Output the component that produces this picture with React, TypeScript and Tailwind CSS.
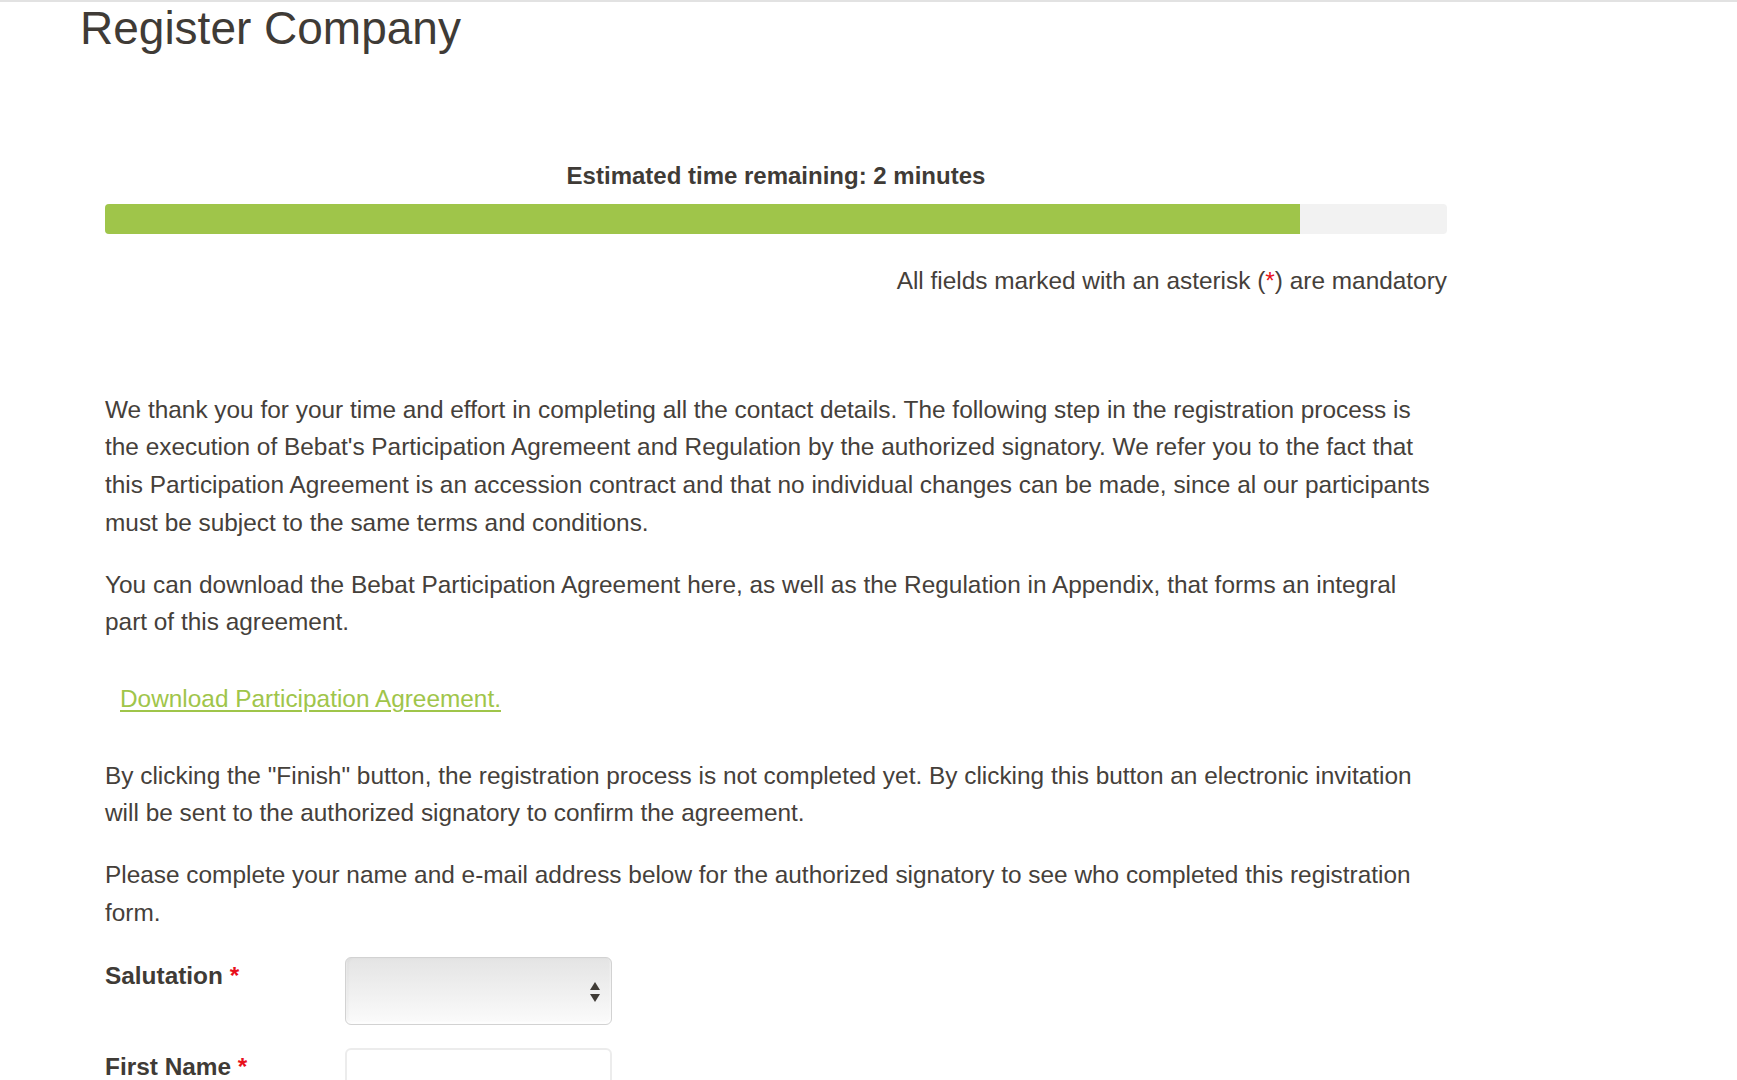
import React from "react";

export default function App() {
  return (
    <div
      className="min-h-[1080px] w-full bg-white text-[#45403a]"
      style={{ fontFamily: '"Liberation Sans", Arial, Helvetica, sans-serif' }}
    >
      <div className="h-[2px] w-full bg-[#e2e2e2]" />
      <div className="pl-[80px]">
        <h1 className="mt-[3px] text-[46px] leading-none font-normal text-[#3f3b36]">Register Company</h1>
        <div className="ml-[25px] w-[1342px]">
          <div className="mt-[111px] text-center text-[24px] leading-[28px] font-bold text-[#3f3b36]">
            Estimated time remaining: 2 minutes
          </div>
          <div className="mt-[14px] flex h-[30px] w-full overflow-hidden rounded-[4px] bg-[#f2f2f2]">
            <div className="h-full w-[1195px] bg-[#9fc54a]" />
          </div>
          <div className="mt-[28px] text-right text-[24.4px] leading-[37.7px]">
            All fields marked with an asterisk (<span className="text-[#e8101b]">*</span>) are mandatory
          </div>
          <div className="mt-[91px] text-[24.4px] leading-[37.7px]">
            <p>
              We thank you for your time and effort in completing all the contact details. The following step in the registration process is
              <br />
              the execution of Bebat's Participation Agremeent and Regulation by the authorized signatory. We refer you to the fact that
              <br />
              this Participation Agreement is an accession contract and that no individual changes can be made, since al our participants
              <br />
              must be subject to the same terms and conditions.
            </p>
            <p className="mt-[24px]">
              You can download the Bebat Participation Agreement here, as well as the Regulation in Appendix, that forms an integral
              <br />
              part of this agreement.
            </p>
            <p className="mt-[39px] pl-[15px]">
              <a href="#" className="text-[#9fc54a] underline underline-offset-[3px]">
                Download Participation Agreement.
              </a>
            </p>
            <p className="mt-[39px]">
              By clicking the "Finish" button, the registration process is not completed yet. By clicking this button an electronic invitation
              <br />
              will be sent to the authorized signatory to confirm the agreement.
            </p>
            <p className="mt-[24px]">
              Please complete your name and e-mail address below for the authorized signatory to see who completed this registration
              <br />
              form.
            </p>
          </div>
          <div className="mt-[26px] flex flex-col gap-[23px]">
            <div className="flex items-start">
              <div className="w-[240px] text-[24.4px] leading-[37.7px] font-bold text-[#3f3b36]">
                Salutation <span className="text-[#e8101b]">*</span>
              </div>
              <div className="relative h-[68px] w-[267px] rounded-[6px] border border-[#d2d2d2] bg-gradient-to-b from-[#e4e4e4] to-[#fbfbfb] shadow-[inset_0_-2px_3px_rgba(255,255,255,0.9),inset_2px_0_3px_rgba(0,0,0,0.05)]">
                <svg className="absolute right-[10px] top-[23px]" width="12" height="22" viewBox="0 0 12 22">
                  <path d="M6 1 L11 9 L1 9 Z" fill="#3f3b36" />
                  <path d="M1 13 L11 13 L6 21 Z" fill="#3f3b36" />
                </svg>
              </div>
            </div>
            <div className="flex items-start">
              <div className="w-[240px] text-[24.4px] leading-[37.7px] font-bold text-[#3f3b36]">
                First Name <span className="text-[#e8101b]">*</span>
              </div>
              <div className="h-[60px] w-[267px] rounded-[6px] border-2 border-[#ececec] bg-white" />
            </div>
          </div>
        </div>
      </div>
    </div>
  );
}
